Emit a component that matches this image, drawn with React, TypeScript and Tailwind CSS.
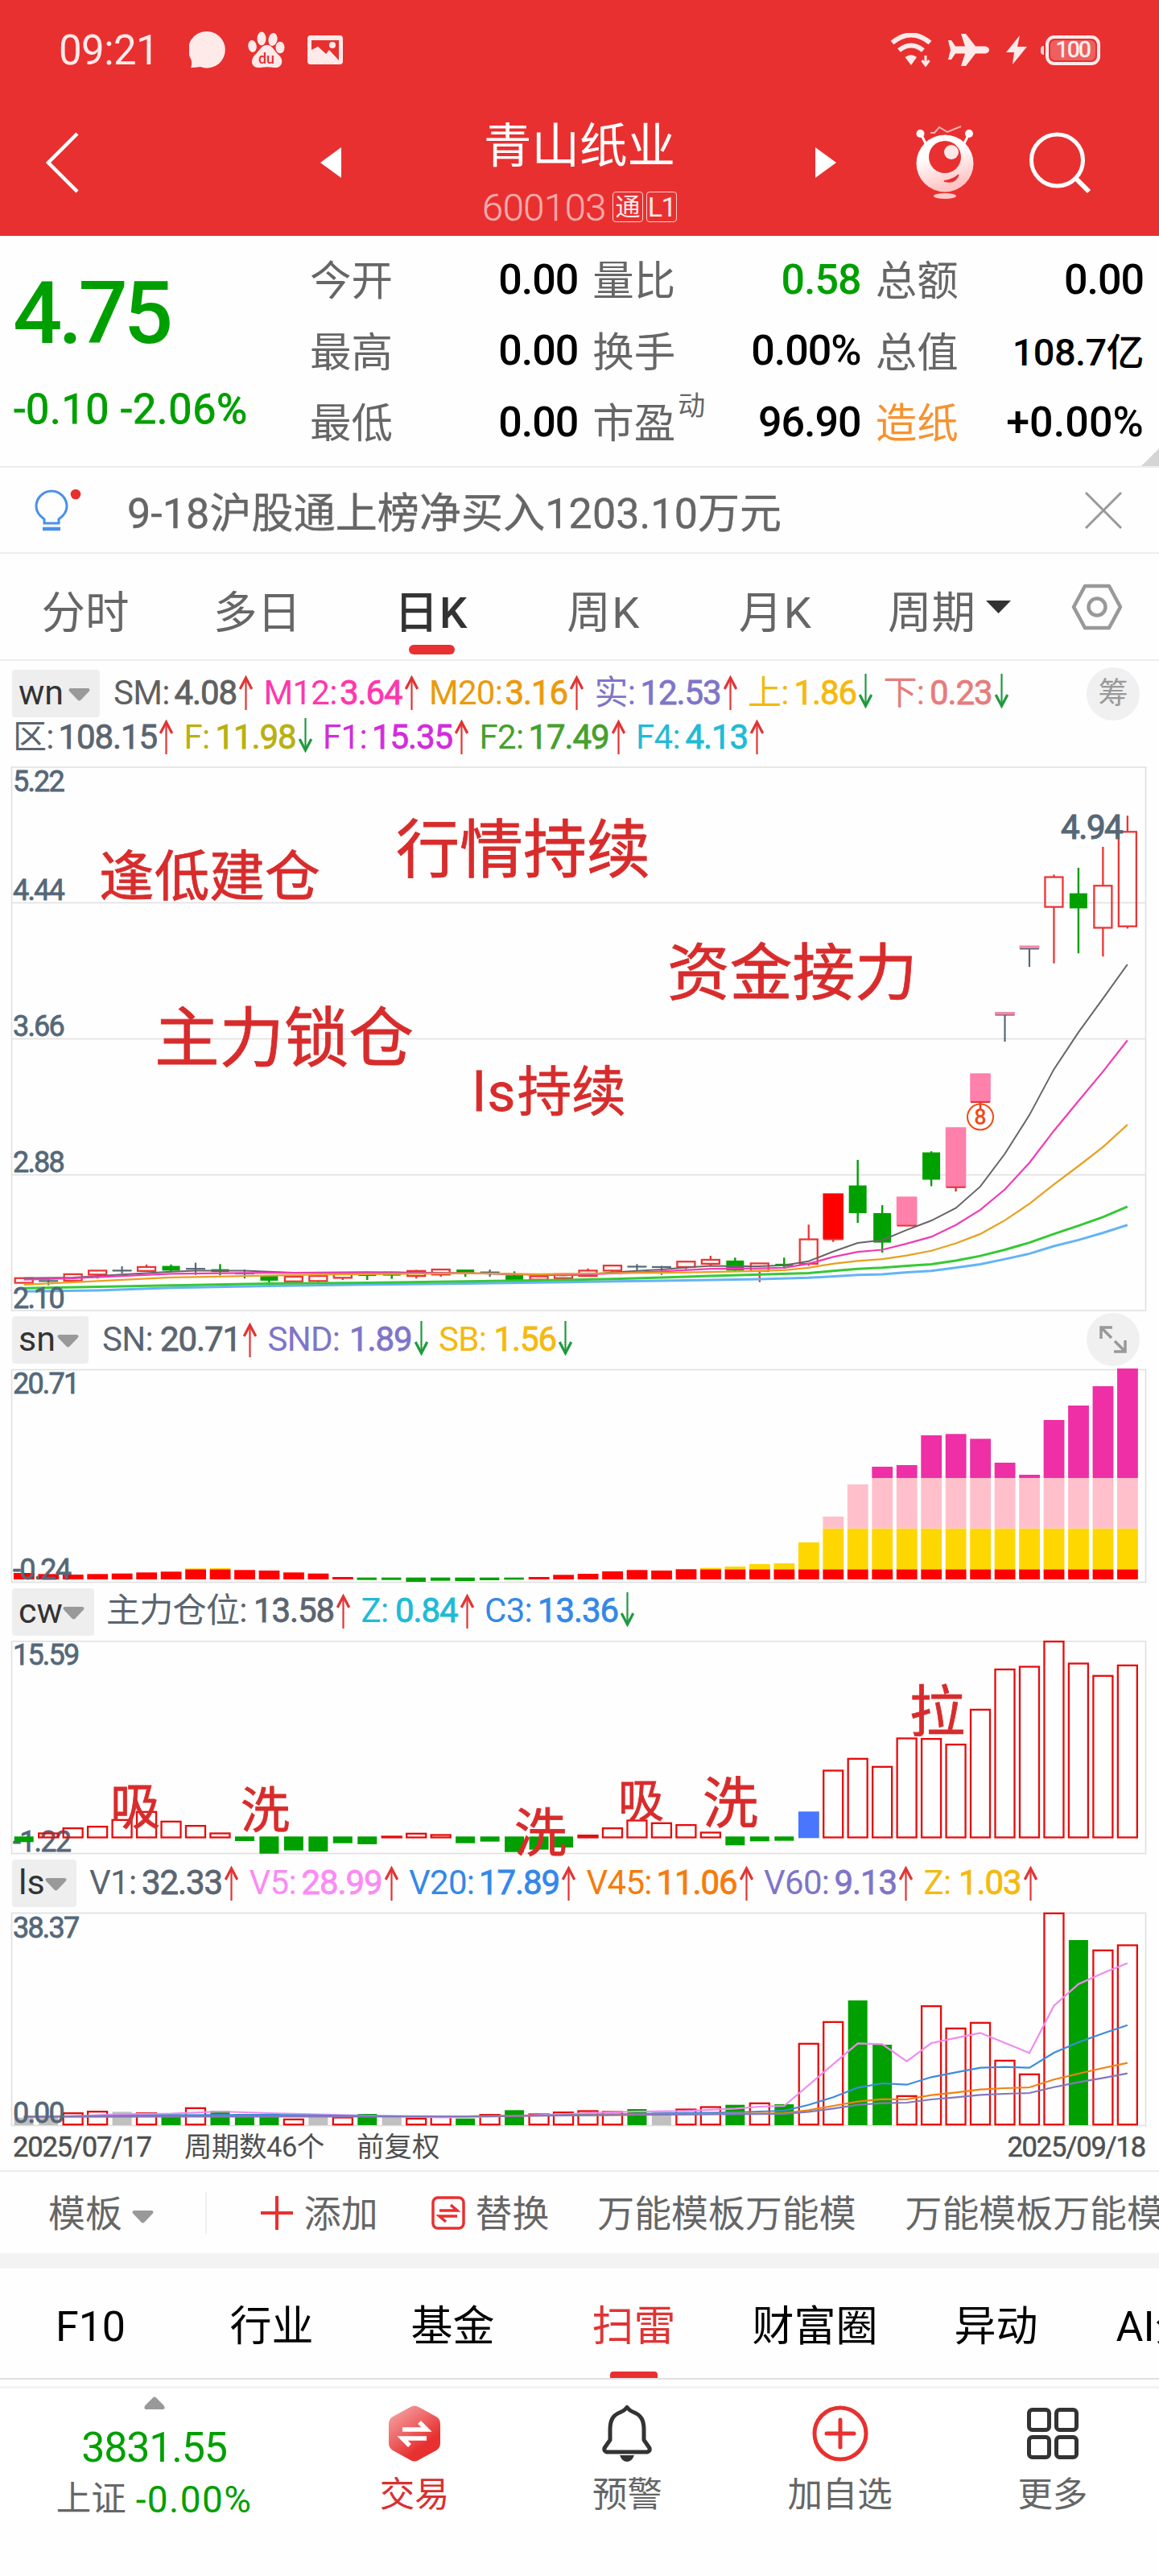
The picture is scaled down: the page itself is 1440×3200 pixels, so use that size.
import type { ReactNode } from "react";

interface Indicator {
  label: string;
  value: string;
  width: number;
  color: string;
  down?: boolean;
}

interface Quote {
  label: string;
  value: string;
  sup?: string;
  labelClass?: string;
  valueClass?: string;
}

type Kind = "up" | "down" | "flat" | "pink" | "solid";
type Candle = [kind: Kind, top: number, bottom: number, high: number, low: number];
type Point = [index: number, y: number];

const FONT = "Roboto, 'Noto Sans CJK SC', sans-serif";
const RED = "#e60c0c";
const GREEN = "#00a000";
const AXIS = "#556878";

const quotes: Quote[] = [
  { label: "今开", value: "0.00" },
  { label: "量比", value: "0.58", valueClass: "text-[52px] tracking-[-1px] text-[#009f00]" },
  { label: "总额", value: "0.00" },
  { label: "最高", value: "0.00" },
  { label: "换手", value: "0.00%" },
  { label: "总值", value: "108.7亿", valueClass: "text-[47px] tracking-[-0.6px] pt-[2px] text-black" },
  { label: "最低", value: "0.00" },
  { label: "市盈", value: "96.90", sup: "动" },
  { label: "造纸", value: "+0.00%", labelClass: "text-[#f7922f]", valueClass: "text-[52px] tracking-[0.1px] text-black" },
];

const mainRow1: Indicator[] = [
  { label: "SM:", value: "4.08", width: 173, color: "#606060" },
  { label: "M12:", value: "3.64", width: 192, color: "#ff37ad" },
  { label: "M20:", value: "3.16", width: 192, color: "#eb9a0c" },
  { label: "实:", value: "12.53", width: 177, color: "#7f75c8" },
  { label: "上:", value: "1.86", width: 155, color: "#f5b90f", down: true },
  { label: "下:", value: "0.23", width: 155, color: "#e67c7c", down: true },
];

const mainRow2: Indicator[] = [
  { label: "区:", value: "108.15", width: 199, color: "#5b6570" },
  { label: "F:", value: "11.98", width: 159, color: "#b9b010", down: true },
  { label: "F1:", value: "15.35", width: 181, color: "#d12ddb" },
  { label: "F2:", value: "17.49", width: 181, color: "#46a02d" },
  { label: "F4:", value: "4.13", width: 159, color: "#1fbbd6" },
];

const snRow: Indicator[] = [
  { label: "SN:", value: "20.71", width: 192, color: "#5b6570" },
  { label: "SND:", value: "1.89", width: 199, color: "#7f75c8", down: true },
  { label: "SB:", value: "1.56", width: 166, color: "#f5b90f", down: true },
];

const cwRow: Indicator[] = [
  { label: "主力仓位:", value: "13.58", width: 303, color: "#5b6570" },
  { label: "Z:", value: "0.84", width: 140, color: "#1fbbd6" },
  { label: "C3:", value: "13.36", width: 186, color: "#3488e8", down: true },
];

const lsRow: Indicator[] = [
  { label: "V1:", value: "32.33", width: 185, color: "#5b6570" },
  { label: "V5:", value: "28.99", width: 185, color: "#fa8bf5" },
  { label: "V20:", value: "17.89", width: 207, color: "#3488e8" },
  { label: "V45:", value: "11.06", width: 207, color: "#f57c0c" },
  { label: "V60:", value: "9.13", width: 185, color: "#7f75c8" },
  { label: "Z:", value: "1.03", width: 141, color: "#f5b90f" },
];

const candles: Candle[] = [
  ["up", 1451, 1464, 1450, 1465],
  ["flat", 1459, 1459, 1450, 1471],
  ["up", 1440, 1458, 1440, 1458],
  ["up", 1430, 1441, 1430, 1452],
  ["flat", 1430, 1430, 1418, 1438],
  ["up", 1420, 1431, 1413, 1431],
  ["down", 1417, 1430, 1413, 1433],
  ["flat", 1425, 1425, 1408, 1442],
  ["down", 1426, 1434, 1412, 1443],
  ["flat", 1438, 1438, 1427, 1452],
  ["down", 1443, 1458, 1443, 1464],
  ["up", 1447, 1460, 1443, 1460],
  ["up", 1445, 1459, 1445, 1463],
  ["up", 1439, 1450, 1439, 1456],
  ["down", 1434, 1445, 1434, 1456],
  ["down", 1433, 1444, 1433, 1453],
  ["up", 1431, 1445, 1428, 1452],
  ["up", 1427, 1441, 1427, 1447],
  ["down", 1427, 1438, 1427, 1447],
  ["flat", 1435, 1435, 1427, 1447],
  ["down", 1443, 1456, 1432, 1461],
  ["up", 1446, 1455, 1446, 1455],
  ["up", 1440, 1451, 1440, 1455],
  ["up", 1430, 1445, 1424, 1445],
  ["up", 1416, 1430, 1416, 1438],
  ["flat", 1419, 1419, 1412, 1430],
  ["flat", 1420, 1420, 1417, 1442],
  ["up", 1405, 1420, 1405, 1426],
  ["up", 1400, 1411, 1389, 1416],
  ["down", 1402, 1430, 1394, 1432],
  ["up", 1410, 1431, 1410, 1462],
  ["down", 1411, 1417, 1394, 1425],
  ["up", 1343, 1411, 1302, 1417],
  ["solid", 1215, 1343, 1215, 1350],
  ["down", 1193, 1270, 1122, 1297],
  ["down", 1270, 1352, 1248, 1380],
  ["pink", 1224, 1305, 1224, 1305],
  ["down", 1101, 1177, 1098, 1195],
  ["pink", 1031, 1198, 1031, 1210],
  ["pink", 881, 961, 881, 982],
  ["flat", 718, 718, 718, 793],
  ["flat", 534, 534, 534, 585],
  ["up", 335, 418, 328, 575],
  ["down", 380, 422, 309, 547],
  ["up", 359, 476, 251, 556],
  ["up", 209, 472, 164, 478],
];

const priceLines: { color: string; width: number; points: Point[] }[] = [
  {
    color: "#64b4f5",
    width: 3,
    points: [[0, 1488], [3, 1485], [6, 1478], [10, 1473], [14, 1469], [18, 1466], [22, 1462], [26, 1458], [30, 1454], [32, 1450], [34, 1442], [35, 1440], [36, 1435], [37, 1431], [38, 1422], [39, 1412], [40, 1398], [41, 1383], [42, 1362], [43, 1345], [44, 1325], [45, 1303]],
  },
  {
    color: "#37c837",
    width: 3,
    points: [[0, 1479], [6, 1471], [10, 1466], [14, 1464], [18, 1460], [22, 1456], [24, 1453], [26, 1449], [28, 1445], [30, 1441], [32, 1437], [33, 1431], [34, 1425], [35, 1422], [36, 1417], [37, 1412], [38, 1402], [39, 1389], [40, 1372], [41, 1352], [42, 1328], [43, 1305], [44, 1281], [45, 1252]],
  },
  {
    color: "#666666",
    width: 2,
    points: [[0, 1451], [2, 1449], [4, 1441], [6, 1433], [7, 1430], [9, 1430], [11, 1436], [14, 1434], [18, 1437], [22, 1443], [23, 1441], [24, 1435], [25, 1431], [26, 1427], [27, 1421], [28, 1417], [29, 1418], [30, 1418], [31, 1415], [32, 1404], [33, 1377], [34, 1353], [35, 1345], [36, 1317], [37, 1291], [38, 1256], [39, 1196], [40, 1105], [41, 997], [42, 870], [43, 767], [44, 673], [45, 578]],
  },
  {
    color: "#f03cb4",
    width: 2.2,
    points: [[0, 1455], [2, 1451], [6, 1439], [10, 1436], [18, 1437], [22, 1443], [24, 1438], [26, 1432], [28, 1425], [30, 1424], [31, 1422], [32, 1411], [33, 1392], [34, 1378], [35, 1372], [36, 1355], [37, 1336], [38, 1303], [39, 1261], [40, 1204], [41, 1130], [42, 1041], [43, 958], [44, 876], [45, 789]],
  },
  {
    color: "#e8a020",
    width: 2.2,
    points: [[0, 1469], [3, 1459], [6, 1449], [9, 1445], [12, 1441], [16, 1439], [18, 1437], [21, 1440], [24, 1437], [26, 1436], [28, 1434], [30, 1431], [31, 1429], [32, 1422], [33, 1411], [34, 1403], [35, 1398], [36, 1388], [37, 1375], [38, 1354], [39, 1328], [40, 1290], [41, 1244], [42, 1190], [43, 1139], [44, 1086], [45, 1024]],
  },
];

const snTops = [
  1002, 1006, 1008, 1006, 1004, 1000, 997, 985, 984, 991, 993, 1000, 1004, 1017, 1028, 1028, 1035, 1031, 1032, 1029,
  1027, 1017, 1009, 1005, 996, 991, 993, 988, 983, 978, 969, 966, 888, 792, 672, 606, 600, 489, 484, 502, 591, 636,
  432, 378, 306, 240,
];

const snBands = [
  { color: "#ff0000", from: 1026, to: 988 },
  { color: "#ffd700", from: 988, to: 836 },
  { color: "#ffc0cb", from: 836, to: 648 },
  { color: "#ee2fa6", from: 648, to: 0 },
];

// values below the 934 baseline are washed out (green) bars
const cwTops = [
  955, 921, 902, 896, 871, 841, 877, 893, 921, 951, 998, 986, 990, 959, 963, 933, 922, 927, 959, 953, 992, 983, 975,
  929, 902, 873, 883, 890, 918, 967, 952, 950, 841, 687, 643, 673, 567, 569, 590, 460, 310, 300, 206, 288, 334, 295,
];

const lsBars: [kind: Kind, top: number][] = [
  ["flat", 962], ["flat", 960], ["up", 944], ["up", 938], ["flat", 940], ["up", 944], ["down", 950], ["up", 925],
  ["down", 937], ["down", 948], ["down", 948], ["up", 967], ["flat", 953], ["up", 960], ["down", 948], ["flat", 955],
  ["up", 964], ["up", 958], ["down", 965], ["up", 950], ["down", 934], ["up", 948], ["up", 941], ["up", 936],
  ["up", 939], ["down", 930], ["flat", 940], ["up", 930], ["up", 921], ["down", 914], ["up", 907], ["down", 912],
  ["up", 685], ["up", 604], ["down", 525], ["down", 690], ["up", 880], ["up", 545], ["up", 628], ["up", 607],
  ["up", 748], ["up", 799], ["up", 199], ["down", 300], ["up", 337], ["up", 318],
];

const lsLines: { color: string; points: Point[] }[] = [
  {
    color: "#ee8cee",
    points: [[0, 958], [2, 957], [4, 948], [6, 947], [7, 943], [8, 939], [10, 945], [14, 954], [17, 961], [19, 958], [21, 952], [23, 945], [25, 939], [27, 937], [29, 928], [30, 921], [31, 918], [34, 685], [35, 688], [36, 752], [37, 684], [38, 665], [39, 646], [40, 683], [41, 721], [42, 545], [43, 464], [44, 423], [45, 386]],
  },
  {
    color: "#3c8cdc",
    points: [[0, 958], [6, 953], [10, 951], [14, 956], [18, 957], [22, 953], [26, 946], [29, 942], [31, 936], [32, 914], [33, 886], [34, 850], [35, 834], [36, 839], [37, 811], [38, 793], [39, 776], [40, 773], [41, 776], [42, 720], [43, 681], [44, 648], [45, 617]],
  },
  {
    color: "#f08214",
    points: [[0, 958], [18, 957], [26, 950], [31, 945], [32, 934], [33, 918], [34, 902], [35, 893], [36, 894], [37, 878], [38, 868], [39, 857], [40, 852], [41, 849], [42, 820], [43, 798], [44, 777], [45, 758]],
  },
  {
    color: "#8278be",
    points: [[0, 958], [18, 957], [26, 951], [31, 948], [32, 940], [33, 928], [34, 914], [35, 908], [36, 906], [37, 894], [38, 886], [39, 877], [40, 873], [41, 870], [42, 848], [43, 830], [44, 814], [45, 797]],
  },
];

const barX = (i: number) => 29.7 + 30.47 * i;
const priceY = (v: number) => 940 + v / 2.24;
const snY = (v: number) => 1620 + v / 3;
const cwY = (v: number) => 1970 + v / 3;
const lsY = (v: number) => 2310 + v / 3;

const toPoints = (points: Point[], y: (v: number) => number) =>
  points.map(([i, v]) => `${barX(i).toFixed(1)},${y(v).toFixed(1)}`).join(" ");

function TrendArrow({ down }: { down?: boolean }) {
  return down ? (
    <svg width="17" height="43" viewBox="0 0 17 43" className="-mt-1 shrink-0" fill="none" stroke="#1f9a3f">
      <path d="M8.5 0V40" strokeWidth="2.2" />
      <path d="M1.2 26L8.5 40L15.8 26" strokeWidth="3.2" />
    </svg>
  ) : (
    <svg width="17" height="43" viewBox="0 0 17 43" className="shrink-0" fill="none" stroke="#e23434">
      <path d="M8.5 3V43" strokeWidth="2.2" />
      <path d="M1.2 17L8.5 3L15.8 17" strokeWidth="3.2" />
    </svg>
  );
}

function IndicatorList({ items, className = "" }: { items: Indicator[]; className?: string }) {
  return (
    <div className={`flex items-center gap-[13.5px] ${className}`}>
      {items.map((item) => (
        <div key={item.label} className="flex shrink-0 items-center" style={{ width: item.width, color: item.color }}>
          <span className="text-[42px] leading-none tracking-[-0.7px] whitespace-nowrap">{item.label}</span>
          <span className="mr-[3px] ml-auto text-[42px] leading-none tracking-[-1.1px] [-webkit-text-stroke:0.8px_currentColor]">
            {item.value}
          </span>
          <TrendArrow down={item.down} />
        </div>
      ))}
    </div>
  );
}

function Caret({ className = "" }: { className?: string }) {
  return (
    <svg width="27" height="16" viewBox="0 0 27 16" className={className} fill="#999">
      <path d="M2.500 0H24.500Q28 1 25.500 4L15.500 14.500Q13.500 16.500 11.500 14.500L1.500 4Q-1 1 2.500 0Z" />
    </svg>
  );
}

function PanelTag({ name, className }: { name: string; className: string }) {
  return (
    <div className={`flex h-[59px] shrink-0 items-center justify-between rounded bg-[#eee] pr-[12px] pl-[8px] ${className}`}>
      <span className="-mt-[2px] text-[43px] leading-none text-[#333]">{name}</span>
      <Caret className="mt-[3px]" />
    </div>
  );
}

function Chart({ top, height, children }: { top: number; height: number; children: ReactNode }) {
  return (
    <svg className="block overflow-visible" width="1440" height={height} viewBox={`0 ${top} 1440 ${height}`} fontFamily={FONT}>
      {children}
    </svg>
  );
}

function Frame({ y1, y2 }: { y1: number; y2: number }) {
  return <rect x="14.500" y={y1} width="1409" height={y2 - y1} fill="none" stroke="#e0e0e0" strokeWidth="1.6" />;
}

function AxisLabel({ y, children }: { y: number; children: string }) {
  return (
    <text x="16" y={y} fontSize="36" fill={AXIS} stroke={AXIS} strokeWidth="0.8" letterSpacing="-1.8">
      {children}
    </text>
  );
}

function Note({ x, y, size, children }: { x: number; y: number; size: number; children: string }) {
  // y is the vertical middle of the characters
  return (
    <text x={x} y={y + size * 0.38} fontSize={size} fill="#d82c2c" stroke="#d82c2c" strokeWidth="0.8">
      {children}
    </text>
  );
}

function CandleMark({ candle, index }: { candle: Candle; index: number }) {
  const [kind, top, bottom, high, low] = candle;
  const x = barX(index);
  const yTop = priceY(top);
  const yBottom = priceY(bottom);
  if (kind === "flat") {
    return (
      <g stroke={AXIS} strokeWidth="2.2">
        <path d={`M${x - 12} ${yTop}H${x + 12}`} />
        <path d={`M${x} ${priceY(high)}V${priceY(low)}`} />
      </g>
    );
  }
  if (kind === "down") {
    return (
      <g fill={GREEN}>
        <rect x={x - 11} y={yTop} width="22" height={Math.max(yBottom - yTop, 3)} />
        <rect x={x - 1.2} y={priceY(high)} width="2.4" height={(low - high) / 2.24} />
      </g>
    );
  }
  if (kind === "pink" || kind === "solid") {
    return (
      <g>
        <path d={`M${x} ${yBottom}V${priceY(low)}`} stroke="#e83030" strokeWidth="2.4" />
        <rect x={x - 12.8} y={yTop} width="25.6" height={yBottom - yTop} fill={kind === "pink" ? "#ff80aa" : "#ff0000"} />
        <path d={`M${x - 12} ${yBottom}H${x + 12}`} stroke="#e83030" strokeWidth="2" />
      </g>
    );
  }
  return (
    <g fill="none" stroke="#ec3636" strokeWidth="2.3">
      <rect x={x - 11} y={yTop} width="22" height={yBottom - yTop} />
      <path d={`M${x} ${priceY(high)}V${yTop}M${x} ${yBottom}V${priceY(low)}`} />
    </g>
  );
}

function PriceChart() {
  return (
    <Chart top={940} height={695}>
      <Frame y1={953} y2={1628} />
      {[1121.5, 1290.5, 1459.5].map((y) => (
        <path key={y} d={`M15 ${y}H1423`} stroke="#e0e0e0" strokeWidth="1.6" />
      ))}
      {candles.map((candle, i) => (
        <CandleMark key={i} candle={candle} index={i} />
      ))}
      <rect x={barX(40) - 12.5} y="1257" width="25" height="3.500" fill="#f587aa" />
      <rect x={barX(41) - 12.5} y="1174.500" width="25" height="3.500" fill="#f587aa" />
      {priceLines.map((line) => (
        <polyline key={line.color} points={toPoints(line.points, priceY)} fill="none" stroke={line.color} strokeWidth={line.width} />
      ))}
      <circle cx="1218" cy="1387.500" r="16" fill="none" stroke="#f04a14" strokeWidth="2" />
      <text x="1218" y="1397" textAnchor="middle" fontSize="27" fontWeight="500" fill="#f04a14">
        8
      </text>
      <AxisLabel y={983}>5.22</AxisLabel>
      <AxisLabel y={1118}>4.44</AxisLabel>
      <AxisLabel y={1287}>3.66</AxisLabel>
      <AxisLabel y={1456}>2.88</AxisLabel>
      <AxisLabel y={1625}>2.10</AxisLabel>
      <text x="1318" y="1041.500" fontSize="42" fill={AXIS} stroke={AXIS} strokeWidth="1.2" letterSpacing="-1.4">
        4.94
      </text>
      <Note x={123} y={1087} size={68.7}>逢低建仓</Note>
      <Note x={492} y={1054} size={79}>行情持续</Note>
      <Note x={192} y={1287} size={80.5}>主力锁仓</Note>
      <text x="587" y="1380" fontSize="67.500" fill="#d82c2c" stroke="#d82c2c" strokeWidth="0.8">
        <tspan letterSpacing="2.2">ls</tspan>持续
      </text>
      <Note x={829} y={1206} size={77.7}>资金接力</Note>
    </Chart>
  );
}

function SnChart() {
  return (
    <Chart top={1693} height={280}>
      <Frame y1={1701.5} y2={1965.5} />
      {snTops.map((top, i) => {
        const x = barX(i) - 12.8;
        if (top > 1026) {
          return <rect key={i} x={x} y={snY(1019)} width="24.500" height={(top - 1019) / 3} fill={GREEN} />;
        }
        return (
          <g key={i}>
            {snBands
              .filter((band) => top < band.from)
              .map((band) => {
                const y = snY(Math.max(top, band.to));
                return <rect key={band.color} x={x} y={y} width="25.800" height={snY(band.from) - y} fill={band.color} />;
              })}
          </g>
        );
      })}
      <AxisLabel y={1731}>20.71</AxisLabel>
      <AxisLabel y={1962}>-0.24</AxisLabel>
    </Chart>
  );
}

function CwChart() {
  return (
    <Chart top={2032} height={278}>
      <Frame y1={2039} y2={2302.5} />
      <AxisLabel y={2068}>15.59</AxisLabel>
      <AxisLabel y={2300}>-1.22</AxisLabel>
      {cwTops.map((top, i) => {
        const x = barX(i);
        if (i === 32) {
          return <rect key={i} x={x - 12.8} y={cwY(top)} width="25.800" height={(940 - top) / 3} fill="#4876ff" />;
        }
        if (top > 934) {
          return <rect key={i} x={x - 12} y={cwY(934)} width="24" height={(top - 934) / 3} fill={GREEN} />;
        }
        return (
          <rect key={i} x={x - 12} y={cwY(top) + 0.5} width="24" height={Math.max((936 - top) / 3, 1)} fill="none" stroke={RED} strokeWidth="2.3" />
        );
      })}
      <Note x={137} y={2243} size={62}>吸</Note>
      <Note x={299} y={2248} size={61}>洗</Note>
      <Note x={639} y={2275} size={65}>洗</Note>
      <Note x={768} y={2235} size={57}>吸</Note>
      <Note x={873} y={2239} size={69}>洗</Note>
      <Note x={1130} y={2125} size={69}>拉</Note>
    </Chart>
  );
}

function LsChart() {
  return (
    <Chart top={2369} height={273}>
      <Frame y1={2376.5} y2={2640.5} />
      {lsBars.map(([kind, top], i) => {
        const x = barX(i) - 12;
        return kind === "up" ? (
          <rect key={i} x={x} y={lsY(top) + 0.5} width="24" height={(986 - top) / 3} fill="none" stroke={RED} strokeWidth="2.3" />
        ) : (
          <rect key={i} x={x} y={lsY(top)} width="24" height={(990 - top) / 3} fill={kind === "down" ? GREEN : "#c0c0c0"} />
        );
      })}
      {lsLines.map((line) => (
        <polyline key={line.color} points={toPoints(line.points, lsY)} fill="none" stroke={line.color} strokeWidth="2.2" />
      ))}
      <AxisLabel y={2407}>38.37</AxisLabel>
      <AxisLabel y={2637}>0.00</AxisLabel>
    </Chart>
  );
}

function StatusBar() {
  return (
    <div className="flex h-[124px] items-center pl-[73px]">
      <span className="w-[162px] text-[51px] leading-none tracking-[-0.6px] text-[#ffeaea]">09:21</span>
      <svg width="45" height="48" viewBox="0 0 45 48" fill="#ffeaea">
        <path d="M23 1A22.500 22.800 0 1 1 14 45Q7 46 2 46Q4 42 2.500 36A22.500 22.800 0 0 1 23 1Z" />
      </svg>
      <svg width="46" height="46" viewBox="0 0 46 46" className="ml-[28px]" fill="#ffeaea">
        <ellipse cx="17" cy="9" rx="5.500" ry="8.500" />
        <ellipse cx="31" cy="10" rx="5.500" ry="8" transform="rotate(10 31 10)" />
        <ellipse cx="5.500" cy="18.500" rx="5.200" ry="7.500" transform="rotate(-8 5 18)" />
        <ellipse cx="40" cy="20" rx="5.500" ry="7.300" />
        <path d="M24 17C31 17 32 24 38 29C46 36 42 46 33 45C27 44 21 44 15 45C5 46 2 37 8 30C14 25 16 17 24 17Z" />
        <text x="23" y="40" textAnchor="middle" fontSize="18" fontWeight="500" fill="#e93030" fontFamily={FONT}>
          du
        </text>
      </svg>
      <svg width="44" height="36" viewBox="0 0 44 36" className="ml-[28px]">
        <rect width="44" height="36" rx="4" fill="#ffeaea" />
        <path d="M5 6H39V31L27 18L23 23L13 14L5 19Z" fill="#e93030" />
        <path d="M5 18L13 14L31 31H5Z" fill="#ffeaea" />
        <circle cx="31" cy="12" r="4" fill="#ffeaea" />
      </svg>

      <svg width="52" height="42" viewBox="0 0 52 42" className="ml-auto" fill="none" stroke="#ffeaea">
        <path d="M2.500 12Q26 -7 49.500 12" strokeWidth="6" />
        <path d="M11 21.500Q26 9.500 41 21.500" strokeWidth="6" />
        <path d="M18.500 30Q26 24.500 33 30L26 40Z" fill="#ffeaea" stroke="none" />
        <path d="M44 28V38M39.500 34L44 40L48.500 34" strokeWidth="3" />
      </svg>
      <svg width="51" height="42" viewBox="0 0 51 42" className="ml-[20px]" fill="#ffeaea">
        <path d="M51 21C51 18 48 16.500 45 16.500H34L22 1H16L21 16.500H9L4 9H0L3 21L0 33H4L9 25.500H21L16 41H22L34 25.500H45C48 25.500 51 24 51 21Z" />
      </svg>
      <svg width="26" height="36" viewBox="0 0 26 36" className="ml-[21px]" fill="#ffeaea">
        <path d="M17 0L0 21H10L8 36L26 14H14Z" />
      </svg>
      <div className="mr-[73px] ml-[17px] flex items-center gap-[2px]">
        <span className="h-[11px] w-[4px] rounded-l bg-[#ffd0d0]" />
        <span className="flex h-[37px] w-[68px] rounded-[11px] border-[4px] border-[#ffeaea] p-[2px]">
          <span className="flex flex-1 items-center justify-center rounded-[6px] bg-[#ef5f5f] text-[28px] leading-none tracking-[-1.5px] text-[#fff3f3] [-webkit-text-stroke:0.6px_currentColor]">
            100
          </span>
        </span>
      </div>
    </div>
  );
}

function Mascot() {
  return (
    <svg width="74" height="92" viewBox="0 0 74 92" className="mr-[67px] ml-[98px] shrink-0">
      <defs>
        <linearGradient id="ball" x1="0" y1="0" x2="0.300" y2="1">
          <stop offset="0.400" stopColor="#fff" />
          <stop offset="1" stopColor="#ffc4c4" />
        </linearGradient>
      </defs>
      <path d="M7 10L14 24M67 10L60 24" stroke="#fff" strokeWidth="3" />
      <circle cx="6.500" cy="10" r="5" fill="#fff" />
      <circle cx="67" cy="10" r="5" fill="#fff" />
      <path d="M19 9H24L30 2L40 8L57 1" fill="none" stroke="#f9b4b4" strokeWidth="2" />
      <circle cx="37" cy="47" r="35.500" fill="url(#ball)" />
      <ellipse cx="37" cy="39" rx="20" ry="20" fill="#e93030" />
      <circle cx="45" cy="33" r="9" fill="#fde8e8" />
      <path d="M36 69Q50 73 54 61Q48 67 36 69Z" fill="#e93030" stroke="#e93030" strokeWidth="1.500" />
      <ellipse cx="37" cy="87.500" rx="14" ry="3.500" fill="#ffc9c9" />
    </svg>
  );
}

function TitleBar() {
  return (
    <div className="flex h-[156px] items-center">
      <svg width="44" height="78" viewBox="0 0 44 78" className="ml-[56px] shrink-0" fill="none" stroke="#fff" strokeWidth="4.500">
        <path d="M40 3L4 39L40 75" />
      </svg>
      <svg width="26" height="38" viewBox="0 0 26 38" className="ml-[298px] shrink-0" fill="#fff">
        <path d="M26 0V38L0 19Z" />
      </svg>
      <div className="ml-[161px] flex w-[270px] shrink-0 flex-col items-center pt-[20px]">
        <h1 className="text-[59.500px] leading-[70px] text-white">青山纸业</h1>
        <div className="mt-[20px] flex h-[40px] items-center">
          <span className="mr-[8px] text-[47px] leading-none font-light tracking-[-0.4px] text-[#f9acac] [-webkit-text-stroke:0.4px_currentColor]">
            600103
          </span>
          <span className="flex h-[38px] w-[38px] items-center justify-center rounded-[4px] border border-[#fbd0d0] text-[31px] leading-none text-[#ffeaea]">通</span>
          <span className="ml-[4px] flex h-[38px] w-[38px] items-center justify-center rounded-[4px] border border-[#fbd0d0] text-[34px] leading-none tracking-[-1.5px] text-[#ffeaea]">L1</span>
        </div>
      </div>
      <svg width="26" height="38" viewBox="0 0 26 38" className="ml-[158px] shrink-0" fill="#fff">
        <path d="M0 0V38L26 19Z" />
      </svg>
      <Mascot />
      <svg width="78" height="78" viewBox="0 0 78 78" className="shrink-0" fill="none" stroke="#fff" strokeWidth="5">
        <circle cx="35.500" cy="36" r="32" />
        <path d="M59 59L75 75" strokeWidth="6" />
      </svg>
    </div>
  );
}

function QuotePanel() {
  return (
    <section className="relative flex h-[288px] border-b-2 border-[#ededed]">
      <div className="w-[385px] shrink-0 pl-[16px] text-[#009f00]">
        <div className="mt-[42px] text-[108px] leading-[108px] font-medium tracking-[-5px]">4.75</div>
        <div className="mt-[41px] pl-px text-[52px] leading-[50px] tracking-[0.7px] whitespace-pre [-webkit-text-stroke:0.9px_currentColor]">
          -0.10 -2.06%
        </div>
      </div>
      <div className="mt-[11px] grid h-[265px] w-[1035px] grid-cols-3 gap-x-[19px]">
        {quotes.map((q) => (
          <div key={q.label} className="flex items-center justify-between">
            <span className={`flex pt-[4px] text-[51.500px] leading-none ${q.labelClass ?? "text-[#666]"}`}>
              {q.label}
              {q.sup && <sup className="top-0 -mt-[14px] ml-[3px] text-[34px] leading-[34px]">{q.sup}</sup>}
            </span>
            <span className={`-mr-px leading-none font-medium ${q.valueClass ?? "text-[52px] tracking-[-1px] text-black"}`}>{q.value}</span>
          </div>
        ))}
      </div>
      <svg width="22" height="22" viewBox="0 0 22 22" className="absolute right-0 bottom-0" fill="#d5d5d5">
        <path d="M22 0V22H0Z" />
      </svg>
    </section>
  );
}

function NewsRow() {
  return (
    <section className="flex h-[107px] items-center border-b-2 border-[#ededed]">
      <svg width="60" height="56" viewBox="0 0 60 56" className="ml-[42px] shrink-0" fill="none" stroke="#4a90ea" strokeWidth="3">
        <path d="M13 44V39C6 34 3 29 3 23A19 19 0 0 1 41 23C41 29 38 34 31 39V44Z" />
        <path d="M11 51H33" strokeWidth="4.500" />
        <circle cx="52" cy="8" r="6.300" fill="#e83030" stroke="none" />
      </svg>
      <p className="ml-[56px] pt-[11px] text-[52px] leading-none tracking-[0.1px] text-[#666] [-webkit-text-stroke:0.4px_currentColor]">
        9-18沪股通上榜净买入1203.10万元
      </p>
      <svg width="46" height="46" viewBox="0 0 46 46" className="mr-[46px] ml-auto" stroke="#999" strokeWidth="3">
        <path d="M1 1L45 45M45 1L1 45" />
      </svg>
    </section>
  );
}

function PeriodTabs() {
  return (
    <nav className="flex h-[133px] border-b-2 border-[#ededed] text-[54.500px] text-[#666]">
      <span className="w-[212px] pt-[41px] text-center leading-[64px]">分时</span>
      <span className="w-[215px] pt-[41px] text-center leading-[64px]">多日</span>
      <span className="flex w-[218px] flex-col items-center pt-[41px] leading-[64px] font-medium text-[#333]">
        <span className="tracking-[1.5px]">日K</span>
        <i className="mt-[8px] block h-[12px] w-[57px] rounded-full bg-[#e83030]" />
      </span>
      <span className="w-[210px] pt-[41px] text-center leading-[64px] tracking-[1.5px]">周K</span>
      <span className="w-[217px] pt-[41px] text-center leading-[64px] tracking-[1.5px]">月K</span>
      <span className="w-[151px] pt-[41px] pl-[31px] leading-[64px]">周期</span>
      <svg width="31" height="16" viewBox="0 0 31 16" className="mt-[58px] ml-[2px]" fill="#333">
        <path d="M0 0H31L15.500 16Z" />
      </svg>
      <svg width="64" height="58" viewBox="0 0 64 58" className="mt-[37px] ml-[75px]" fill="none" stroke="#999" strokeWidth="4.500">
        <path d="M17 3H47L61 29L47 55H17L3 29Z" strokeLinejoin="round" />
        <circle cx="32" cy="29" r="10.500" />
      </svg>
    </nav>
  );
}

function TemplateBar() {
  return (
    <section className="flex h-[103px] items-center overflow-hidden border-t-2 border-[#ededed] text-[45.900px] leading-none whitespace-nowrap text-[#666]">
      <span className="ml-[60px] pt-[4px]">模板</span>
      <Caret className="mt-[10px] ml-[12px] shrink-0" />
      <i className="ml-[64px] h-[52px] w-[2px] shrink-0 bg-[#efefef]" />
      <svg width="40" height="42" viewBox="0 0 40 42" className="ml-[67px] shrink-0" stroke="#e83030" strokeWidth="4">
        <path d="M20 0V42M0 21H40" />
      </svg>
      <span className="ml-[14px] pt-[4px]">添加</span>
      <svg width="42" height="42" viewBox="0 0 42 42" className="ml-[66px] shrink-0" fill="none" stroke="#e83030" strokeWidth="3.500">
        <rect x="2" y="2" width="38" height="38" rx="6" />
        <path d="M10 18H32L24 11M32 25H10L18 32" />
      </svg>
      <span className="ml-[13px] pt-[4px]">替换</span>
      <span className="ml-[60px] pt-[4px]">万能模板万能模</span>
      <span className="ml-[61px] pt-[4px]">万能模板万能模</span>
    </section>
  );
}

const infoTabs = ["F10", "行业", "基金", "扫雷", "财富圈", "异动", "AI分析"];

function InfoTabs() {
  return (
    <nav className="flex h-[138px] overflow-hidden border-b-2 border-[#e0e0e0]">
      {infoTabs.map((tab) => (
        <span
          key={tab}
          className={`flex w-[225px] shrink-0 flex-col items-center justify-between pt-[42px] text-[52px] leading-[62px] whitespace-nowrap ${tab === "扫雷" ? "text-[#e03434]" : "text-black"}`}
        >
          {tab}
          {tab === "扫雷" && <i className="block h-[8px] w-[59px] rounded-t bg-[#e83030]" />}
        </span>
      ))}
    </nav>
  );
}

function NavItem({ label, active, children }: { label: string; active?: boolean; children: ReactNode }) {
  return (
    <div className="flex flex-1 flex-col items-center pt-[20px]">
      <svg width="72" height="72" viewBox="0 0 72 72" fill="none">
        {children}
      </svg>
      <span className={`mt-[16px] text-[43.500px] leading-[50px] ${active ? "text-[#d93030]" : "text-[#666]"}`}>{label}</span>
    </div>
  );
}

function BottomNav() {
  return (
    <nav className="mt-[8px] flex border-t-[3px] border-[#f3f3f3] bg-white">
      <div className="flex w-[383px] flex-col items-center pt-[10px]">
        <svg width="26" height="16" viewBox="0 0 26 16" fill="#999">
          <path d="M11 1.500Q13 -0.500 15 1.500L24.500 11Q27 15 24 16H2Q-1 15 1.500 11Z" />
        </svg>
        <span className="mt-[23px] text-[52px] leading-[50px] tracking-[-1.2px] text-[#009f00]">3831.55</span>
        <span className="mt-[14px] flex items-center gap-[12px] text-[43.500px] leading-[50px] text-[#666]">
          上证
          <span className="text-[46px] tracking-[1.4px] text-[#009f00]">-0.00%</span>
        </span>
      </div>
      <NavItem label="交易" active>
        <defs>
          <linearGradient id="trade" x1="0" y1="0" x2="0.700" y2="1">
            <stop offset="0" stopColor="#f7b0b0" />
            <stop offset="0.800" stopColor="#e83030" />
          </linearGradient>
        </defs>
        <path d="M31 3Q36 0 41 3L63 15Q68 18 68 24V48Q68 54 63 57L41 69Q36 72 31 69L9 57Q4 54 4 48V24Q4 18 9 15Z" fill="url(#trade)" />
        <path d="M21 31H51L42 22M51 42H21L30 51" stroke="#fff" strokeWidth="5.500" />
      </NavItem>
      <NavItem label="预警">
        <path d="M36 3.500C38 6 40 8 43 9C54 13 57 20 57 31V44L64 54Q65 58 61 59H11Q7 58 8 54L15 44V31C15 20 18 13 29 9C32 8 34 6 36 3.500Z" stroke="#333" strokeWidth="5" strokeLinejoin="round" />
        <path d="M27 63H45Q42 71 36 71Q30 71 27 63Z" fill="#333" />
      </NavItem>
      <NavItem label="加自选">
        <circle cx="36" cy="36" r="32" stroke="#e83030" strokeWidth="5" />
        <path d="M36 19V53M19 36H53" stroke="#e83030" strokeWidth="5" strokeLinecap="round" />
      </NavItem>
      <NavItem label="更多">
        <g stroke="#333" strokeWidth="5">
          <rect x="6.500" y="6.500" width="25" height="25" rx="4" />
          <rect x="40.500" y="6.500" width="25" height="25" rx="4" />
          <rect x="6.500" y="40.500" width="25" height="25" rx="4" />
          <rect x="40.500" y="40.500" width="25" height="25" rx="4" />
        </g>
      </NavItem>
    </nav>
  );
}

export default function App() {
  return (
    <div className="h-[3200px] w-[1440px] overflow-hidden bg-[#fefefe] font-[Roboto,'Noto_Sans_CJK_SC',sans-serif]">
      <header className="h-[293px] bg-[#e93030]">
        <StatusBar />
        <TitleBar />
      </header>
      <QuotePanel />
      <NewsRow />
      <PeriodTabs />

      <div className="h-[119px] pt-[11px]">
        <div className="flex h-[59px] items-center">
          <PanelTag name="wn" className="ml-[15px] w-[109px]" />
          <IndicatorList items={mainRow1} className="-mt-[2px] ml-[17px]" />
          <span className="ml-auto mr-[24px] flex h-[66px] w-[66px] shrink-0 items-center justify-center rounded-full bg-[#f0f0f0] text-[37px] leading-none text-[#999]">
            筹
          </span>
        </div>
        <IndicatorList items={mainRow2} className="ml-[16px] h-[49px]" />
      </div>
      <PriceChart />

      <div className="flex h-[58px] items-center">
        <PanelTag name="sn" className="ml-[15px] w-[95px]" />
        <IndicatorList items={snRow} className="ml-[17px]" />
        <span className="ml-auto mr-[24px] flex h-[66px] w-[66px] items-center justify-center rounded-full bg-[#f0f0f0]">
          <svg width="34" height="34" viewBox="0 0 34 34" fill="none" stroke="#999" strokeWidth="3.500">
            <path d="M2 16V2H16M2 2L15 15M32 18V32H18M32 32L19 19" />
          </svg>
        </span>
      </div>
      <SnChart />

      <div className="flex h-[59px] items-center">
        <PanelTag name="cw" className="ml-[15px] w-[102px]" />
        <IndicatorList items={cwRow} className="-mt-[3px] ml-[15px]" />
      </div>
      <CwChart />

      <div className="flex h-[59px] items-center">
        <PanelTag name="ls" className="ml-[15px] w-[80px]" />
        <IndicatorList items={lsRow} className="-mt-[1px] ml-[16px]" />
      </div>
      <LsChart />

      <div className="flex h-[54px] items-center pr-[17px] pb-[3px] pl-[16px] text-[34.500px] leading-none text-[#505050]">
        <span className="w-[213px] tracking-[-1.2px] [-webkit-text-stroke:0.5px_currentColor]">2025/07/17</span>
        <span className="w-[214px] tracking-[-0.5px]">周期数46个</span>
        <span>前复权</span>
        <span className="ml-auto tracking-[-1.2px] [-webkit-text-stroke:0.5px_currentColor]">2025/09/18</span>
      </div>

      <TemplateBar />
      <div className="h-[19px] bg-[#f3f3f3]" />
      <InfoTabs />
      <BottomNav />
    </div>
  );
}
